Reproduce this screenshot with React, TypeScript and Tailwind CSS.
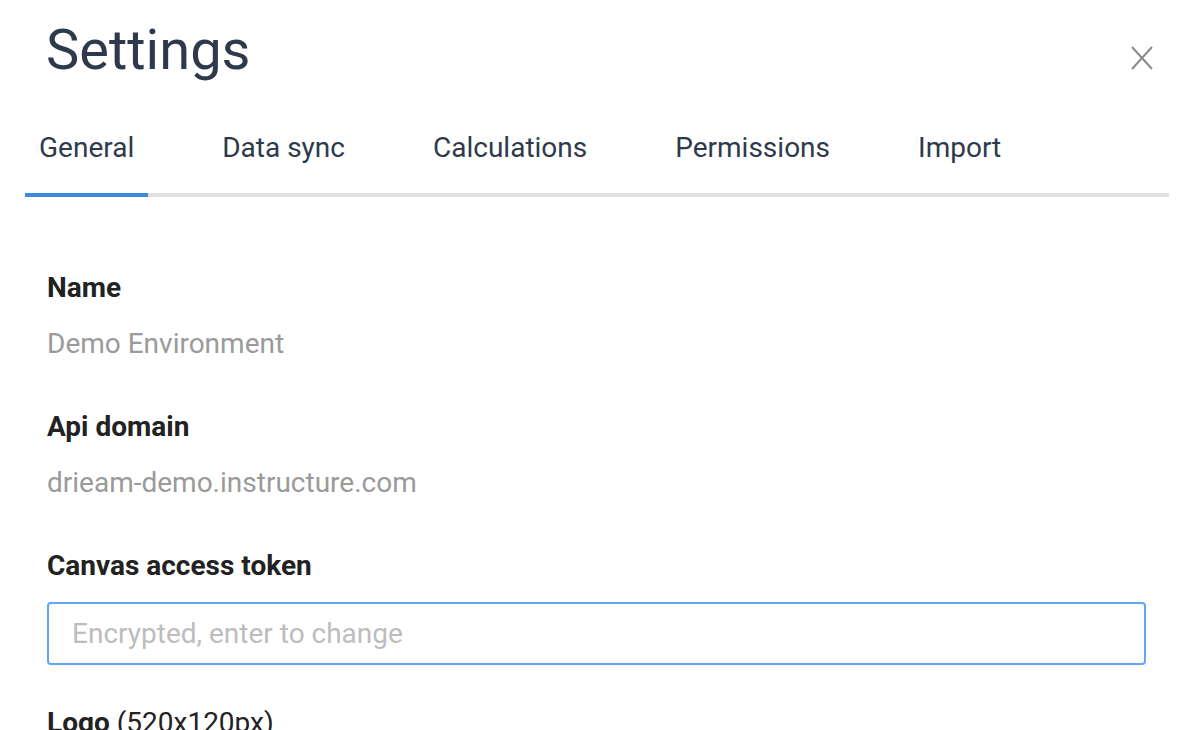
import React from 'react';

const tabs = ['General', 'Data sync', 'Calculations', 'Permissions', 'Import'];

function Field({ label, value }: { label: string; value: string }) {
  return (
    <div className="mb-[55px]">
      <div className="text-[28px] leading-none font-bold text-[#222222]">{label}</div>
      <div className="mt-[28px] text-[28px] leading-none text-[#9a9a9a]">{value}</div>
    </div>
  );
}

export default function App() {
  return (
    <div className="w-[1195px] h-[730px] overflow-hidden bg-white font-['Roboto',sans-serif]">
      <div className="flex items-start justify-between">
        <h1 className="pl-[46px] pt-[22px] text-[56px] leading-none font-normal text-[#2e3a4b]">Settings</h1>
        <button className="mt-[46px] mr-[42px] text-[#8a8a8a]" aria-label="Close">
          <svg width="22" height="24" viewBox="0 0 22 24" fill="none" stroke="currentColor" strokeWidth="2">
            <path d="M1 1L21 23M21 1L1 23" />
          </svg>
        </button>
      </div>

      <div className="mt-[56px] ml-[25px] mr-[26px] flex gap-[60px] border-b-4 border-[#e0e0e0]">
        {tabs.map((t, i) => (
          <div
            key={t}
            className={`px-[14px] pb-[31px] -mb-[4px] border-b-4 text-[28px] leading-none text-[#2e3a4b] ${
              i === 0 ? 'border-[#3d8ae0]' : 'border-transparent'
            }`}
          >
            {t}
          </div>
        ))}
      </div>

      <div className="pl-[47px] pr-[49px] pt-[77px]">
        <Field label="Name" value="Demo Environment" />
        <Field label="Api domain" value="drieam-demo.instructure.com" />
        <div className="text-[28px] leading-none font-bold text-[#222222]">Canvas access token</div>
        <input
          className="mt-[22px] w-full h-[63px] rounded-[4px] border-2 border-[#64a4f4] px-[23px] text-[28px] text-[#333] placeholder:text-[#bdbdbd] outline-none"
          placeholder="Encrypted, enter to change"
        />
        <div className="mt-[44px] text-[28px] leading-none text-[#222222]">
          <span className="font-bold">Logo</span> (520x120px)
        </div>
      </div>
    </div>
  );
}
